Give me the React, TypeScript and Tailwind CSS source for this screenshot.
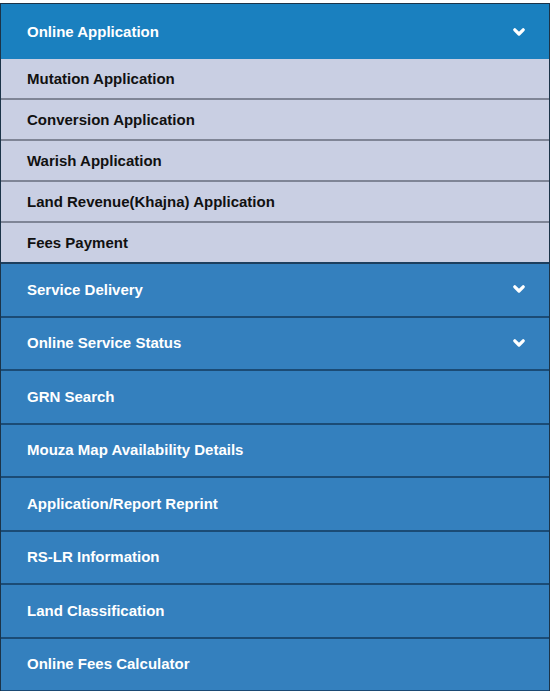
const subItems = [
  'Mutation Application',
  'Conversion Application',
  'Warish Application',
  'Land Revenue(Khajna) Application',
  'Fees Payment',
];

const menuItems: { label: string; dropdown?: boolean }[] = [
  { label: 'Service Delivery', dropdown: true },
  { label: 'Online Service Status', dropdown: true },
  { label: 'GRN Search' },
  { label: 'Mouza Map Availability Details' },
  { label: 'Application/Report Reprint' },
  { label: 'RS-LR Information' },
  { label: 'Land Classification' },
  { label: 'Online Fees Calculator' },
];

function Chevron() {
  return (
    <svg width="12" height="9" viewBox="0 0 12 9" className="mr-[24px] shrink-0">
      <path d="M1.8 1.8 L6 6 L10.2 1.8" fill="none" stroke="white" strokeWidth="3.2" strokeLinecap="round" strokeLinejoin="round" />
    </svg>
  );
}

export default function App() {
  return (
    <div className="h-[691px] overflow-hidden bg-white pt-[3px] font-['Liberation_Sans',Arial,sans-serif]">
      <div className="w-[550px] border-x border-t border-[#1b3348]">
        <div className="flex h-[55px] items-center justify-between bg-[#1a80bf] pl-[26px] pt-[2px] text-[15px] font-bold text-white">
          <span>Online Application</span>
          <Chevron />
        </div>

        {subItems.map((item, i) => (
          <div
            key={item}
            className={`flex h-[41px] items-center bg-[#c9cfe3] pl-[26px] pt-[2px] text-[15px] font-bold text-[#111] ${
              i === subItems.length - 1 ? 'border-b-2 border-[#1d3f5e]' : 'border-b-2 border-[#7f8596]'
            }`}
          >
            {item}
          </div>
        ))}

        {menuItems.map((item) => (
          <div
            key={item.label}
            className="flex h-[53.5px] items-center justify-between border-b-2 border-[#1b4b75] bg-[#3480be] pl-[26px] text-[15px] font-bold text-white"
          >
            <span>{item.label}</span>
            {item.dropdown && <Chevron />}
          </div>
        ))}
      </div>
    </div>
  );
}
